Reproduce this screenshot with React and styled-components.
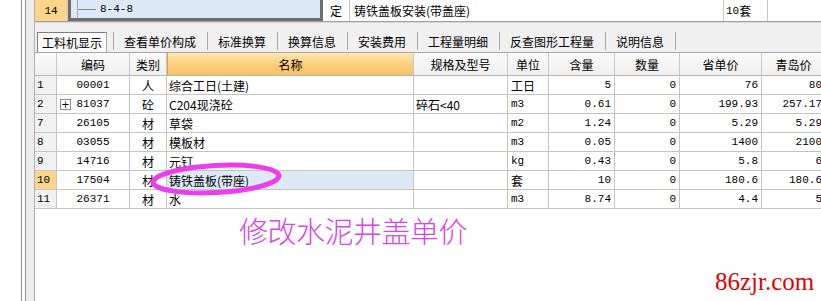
import React from "react";
import styled, { createGlobalStyle } from "styled-components";

const Global = createGlobalStyle`
  html, body { margin: 0; padding: 0; background: #fff; overflow: hidden; }
  body { font-family: "Noto Sans CJK SC", sans-serif; font-size: 12px; color: #000; }
`;

const MONO = `"Liberation Mono", "Noto Sans CJK SC", monospace`;
const CJK = `"Noto Sans CJK SC", "Liberation Sans", sans-serif`;
const COLS = "22px 73px 37px 247px 94px 41px 66px 65px 82px 64px";
const LINE = "#c4c4c4";

const Page = styled.div`
  position: relative;
  display: flex;
  width: 821px;
  height: 301px;
  overflow: hidden;
  background: #fff;
`;

const Margin = styled.div`
  width: 21px;
  flex: none;
`;

const Rail = styled.div`
  width: 3px;
  flex: none;
  border-left: 1px solid #8e8e8e;
  border-right: 1px solid #8e8e8e;
`;

const Band = styled.div`
  width: 8px;
  flex: none;
  background: #ececec;
  border-right: 1px solid #b0b0b0;
`;

const Main = styled.div`
  flex: none;
  width: 800px;
  display: flex;
  flex-direction: column;
`;

const TopRow = styled.div`
  display: grid;
  grid-template-columns: 33px 255px 27px 374px 44px 60px;
  height: 21px;
  border-bottom: 1px solid #a0a0a0;
  background: #fff;
`;

const TopCell = styled.div`
  display: flex;
  align-items: center;
  justify-content: ${(p) => (p.$center ? "center" : "flex-start")};
  padding-left: ${(p) => p.$pad || 0}px;
  border-right: 1px solid ${LINE};
  background: ${(p) => p.$bg || "#fff"};
  font-family: ${(p) => (p.$mono ? MONO : CJK)};
  font-size: ${(p) => (p.$mono ? "11px" : "12px")};
  white-space: nowrap;
  overflow: hidden;
`;

const CodeCell = styled.div`
  display: flex;
  align-items: stretch;
  padding-left: 6px;
  background: #dde9f6;
  border: 3px solid #6e6e6e;
  border-top: none;
  font-family: ${MONO};
  font-size: 11px;
`;

const TreeBranch = styled.span`
  width: 18px;
  flex: none;
  border-left: 1px solid #a8a8a8;
  background: linear-gradient(#8a8a8a, #8a8a8a) no-repeat left center / 100% 1px;
`;

const CodeText = styled.span`
  display: flex;
  align-items: center;
  margin-left: 4px;
`;

const Small = styled.span`
  font-family: ${MONO};
  font-size: 11px;
`;

const TabStrip = styled.div`
  display: flex;
  align-items: flex-start;
  height: 30px;
  padding-top: 9px;
  box-sizing: border-box;
  border-top: 1px solid #d8d8d8;
  background: #f0f0f0;
`;

const Tab = styled.div`
  height: ${(p) => (p.$active ? 21 : 18)}px;
  box-sizing: border-box;
  display: flex;
  align-items: center;
  font-family: ${CJK};
  font-size: 12px;
  white-space: nowrap;
  ${(p) =>
    p.$active
      ? `
    width: 70px;
    margin-left: 2px;
    margin-right: 6px;
    justify-content: center;
    align-items: flex-start;
    padding-top: 1px;
    background: #fafafa;
    border: 1px solid #7c7c7c;
    border-right-color: #a8a8a8;
    border-bottom: none;
  `
      : `
    padding: 0 11px 0 10px;
    border-left: 1px solid #a8a8a8;
  `}
  ${(p) => (p.$last ? "border-right: 1px solid #a8a8a8;" : "")}
`;

const Grid = styled.div`
  display: flex;
  flex-direction: column;
  background: #fff;
`;

const Row = styled.div`
  display: grid;
  grid-template-columns: ${COLS};
  height: ${(p) => (p.$head ? 24 : 19)}px;
  box-sizing: border-box;
  border-bottom: 1px solid ${LINE};
  ${(p) => (p.$head ? "border-top: 1px solid #a8a8a8; border-bottom-color: #b4b4b4;" : "")}
`;

const Cell = styled.div`
  display: flex;
  align-items: center;
  justify-content: ${(p) =>
    p.$align === "right" ? "flex-end" : p.$align === "center" ? "center" : "flex-start"};
  padding: 0 ${(p) => (p.$align === "right" ? 3 : 0)}px 0
    ${(p) => (p.$align === "left" ? (p.$indent ?? 2) : 0)}px;
  border-right: 1px solid ${LINE};
  background: ${(p) => p.$bg || "#fff"};
  font-family: ${(p) => (p.$mono ? MONO : CJK)};
  font-size: ${(p) => (p.$mono ? "11px" : "12px")};
  white-space: nowrap;
  overflow: hidden;
  position: relative;
`;

const HeadCell = styled.div`
  display: flex;
  align-items: center;
  justify-content: center;
  border-right: 1px solid #c8c8c8;
  background: ${(p) =>
    p.$hot
      ? "linear-gradient(#ffe6ae, #fbcd7c 55%, #f7c264)"
      : "linear-gradient(#fafafa, #efefef)"};
  ${(p) => (p.$hot ? "border-left: 1px solid #e3a13e;" : "")}
  font-family: ${CJK};
  font-size: 12px;
  white-space: nowrap;
`;

const Expander = styled.span`
  position: absolute;
  left: 3px;
  top: 4px;
  width: 9px;
  height: 9px;
  border: 1px solid #8a8a8a;
  background: #fff;
  display: flex;
  align-items: center;
  justify-content: center;
  font-family: "DejaVu Sans", sans-serif;
  font-size: 10px;
  line-height: 9px;
`;

const Callout = styled.svg`
  position: absolute;
  left: 148px;
  top: 161px;
  overflow: visible;
  pointer-events: none;
`;

const Note = styled.div`
  position: absolute;
  left: 239px;
  top: 209px;
  font-family: ${CJK};
  font-weight: 300;
  font-size: 29px;
  letter-spacing: -0.5px;
  color: #d645e6;
  white-space: nowrap;
`;

const Watermark = styled.div`
  position: absolute;
  left: 715px;
  top: 268px;
  font-family: "Liberation Serif", "DejaVu Serif", serif;
  font-size: 25px;
  line-height: 28px;
  color: #e40000;
  white-space: nowrap;
`;

const tabs = [
  "工料机显示",
  "查看单价构成",
  "标准换算",
  "换算信息",
  "安装费用",
  "工程量明细",
  "反查图形工程量",
  "说明信息",
];

const heads = ["", "编码", "类别", "名称", "规格及型号", "单位", "含量", "数量", "省单价", "青岛价"];

const rows = [
  { n: "1", code: "00001", cat: "人", name: "综合工日(土建)", spec: "", unit: "工日", q: "5", qty: "0", p: "76", qd: "80" },
  { n: "2", code: "81037", cat: "砼", name: "C204现浇砼", spec: "碎石<40", unit: "m3", q: "0.61", qty: "0", p: "199.93", qd: "257.17", exp: true },
  { n: "7", code: "26105", cat: "材", name: "草袋", spec: "", unit: "m2", q: "1.24", qty: "0", p: "5.29", qd: "5.29" },
  { n: "8", code: "03055", cat: "材", name: "模板材", spec: "", unit: "m3", q: "0.05", qty: "0", p: "1400", qd: "2100" },
  { n: "9", code: "14716", cat: "材", name: "元钉", spec: "", unit: "kg", q: "0.43", qty: "0", p: "5.8", qd: "6" },
  { n: "10", code: "17504", cat: "材", name: "铸铁盖板(带座)", spec: "", unit: "套", q: "10", qty: "0", p: "180.6", qd: "180.6", sel: true },
  { n: "11", code: "26371", cat: "材", name: "水", spec: "", unit: "m3", q: "8.74", qty: "0", p: "4.4", qd: "5" },
];

const isAscii = (s) => /^[\x00-\x7f]*$/.test(s);

export default function App() {
  return (
    <>
      <Global />
      <Page>
        <Margin />
        <Rail />
        <Band />
        <Main>
          <TopRow>
            <TopCell $center $mono $bg="#fdd58a">14</TopCell>
            <CodeCell>
              <TreeBranch />
              <CodeText>8-4-8</CodeText>
            </CodeCell>
            <TopCell $center>定</TopCell>
            <TopCell $pad={4}>铸铁盖板安装(带盖座)</TopCell>
            <TopCell $pad={2}>
              <Small>10</Small>套
            </TopCell>
            <TopCell />
          </TopRow>
          <TabStrip>
            {tabs.map((t, i) => (
              <Tab key={t} $active={i === 0} $last={i === tabs.length - 1}>
                {t}
              </Tab>
            ))}
          </TabStrip>
          <Grid>
            <Row $head>
              {heads.map((h, i) => (
                <HeadCell key={i} $hot={i === 3}>
                  {h}
                </HeadCell>
              ))}
            </Row>
            {rows.map((r) => (
              <Row key={r.n}>
                <Cell $align="left" $indent={2} $mono $bg={r.sel ? "#fdd58a" : "#f1f1f1"}>
                  {r.n}
                </Cell>
                <Cell $align="center" $mono>
                  {r.exp && <Expander>+</Expander>}
                  {r.code}
                </Cell>
                <Cell $align="center">{r.cat}</Cell>
                <Cell $align="left" $mono={isAscii(r.name)} $bg={r.sel ? "#dde9f6" : undefined}>
                  {r.name}
                </Cell>
                <Cell $align="left">{r.spec}</Cell>
                <Cell $align="left" $indent={3} $mono={isAscii(r.unit)}>
                  {r.unit}
                </Cell>
                <Cell $align="right" $mono>{r.q}</Cell>
                <Cell $align="right" $mono>{r.qty}</Cell>
                <Cell $align="right" $mono>{r.p}</Cell>
                <Cell $align="right" $mono>{r.qd}</Cell>
              </Row>
            ))}
          </Grid>
        </Main>
        <Callout width="136" height="36" viewBox="0 0 136 36">
          <ellipse
            cx="68"
            cy="18"
            rx="63"
            ry="13.5"
            fill="none"
            stroke="#ec3dec"
            strokeWidth="5"
            transform="rotate(-3 68 18)"
          />
        </Callout>
        <Note>修改水泥井盖单价</Note>
        <Watermark>86zjr.com</Watermark>
      </Page>
    </>
  );
}
